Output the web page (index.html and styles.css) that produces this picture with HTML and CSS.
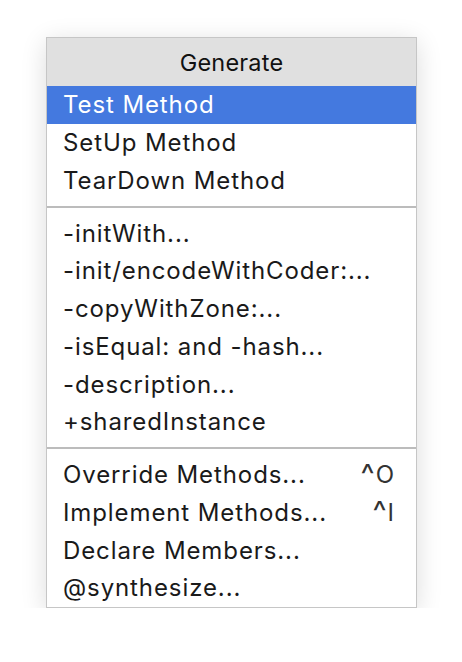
FILE: index.html
```html
<!DOCTYPE html>
<html>
<head>
<meta charset="utf-8">
<link rel="stylesheet" href="styles.css">
</head>
<body>
<div class="menu">
  <div class="header">Generate</div>
  <div class="group">
    <div class="row selected">Test Method</div>
    <div class="row">SetUp Method</div>
    <div class="row">TearDown Method</div>
  </div>
  <div class="sep"></div>
  <div class="group">
    <div class="row">-initWith...</div>
    <div class="row">-init/encodeWithCoder:...</div>
    <div class="row">-copyWithZone:...</div>
    <div class="row">-isEqual: and -hash...</div>
    <div class="row">-description...</div>
    <div class="row">+sharedInstance</div>
  </div>
  <div class="sep"></div>
  <div class="group">
    <div class="row"><span>Override Methods...</span><span class="key"><span class="caret">^</span>O</span></div>
    <div class="row"><span>Implement Methods...</span><span class="key"><span class="caret">^</span>I</span></div>
    <div class="row">Declare Members...</div>
    <div class="row">@synthesize...</div>
  </div>
</div>
</body>
</html>
```
FILE: styles.css
```css
html, body {
  margin: 0;
  padding: 0;
  background: #ffffff;
}
body {
  padding: 37px 0 0 46px;
  font-family: Inter, "Noto Sans", sans-serif;
}
.menu {
  width: 369px;
  border: 1px solid #c6c6c6;
  background: #ffffff;
  box-shadow: 0 5px 24px rgba(0, 0, 0, 0.14);
  display: flex;
  flex-direction: column;
}
.header {
  height: 48px;
  background: #e0e0e0;
  display: flex;
  align-items: center;
  justify-content: center;
  font-size: 23.5px;
  letter-spacing: 0.2px;
  color: #111;
}
.group {
  display: flex;
  flex-direction: column;
}
.row {
  height: 37.7px;
  display: flex;
  align-items: center;
  justify-content: space-between;
  padding: 0 22px 0 16px;
  font-size: 24px;
  letter-spacing: 0.9px;
  color: #1a1a1a;
}
.row.selected {
  background: #4479df;
  color: #ffffff;
}
.key {
  color: #333;
  letter-spacing: 0;
  display: flex;
  align-items: center;
}
.caret {
  font-size: 30px;
  line-height: 1;
  margin-right: 1px;
  transform: translateY(-1px);
}
.sep {
  height: 2px;
  background: #bcbcbc;
  margin: 6.7px 0;
}
```
